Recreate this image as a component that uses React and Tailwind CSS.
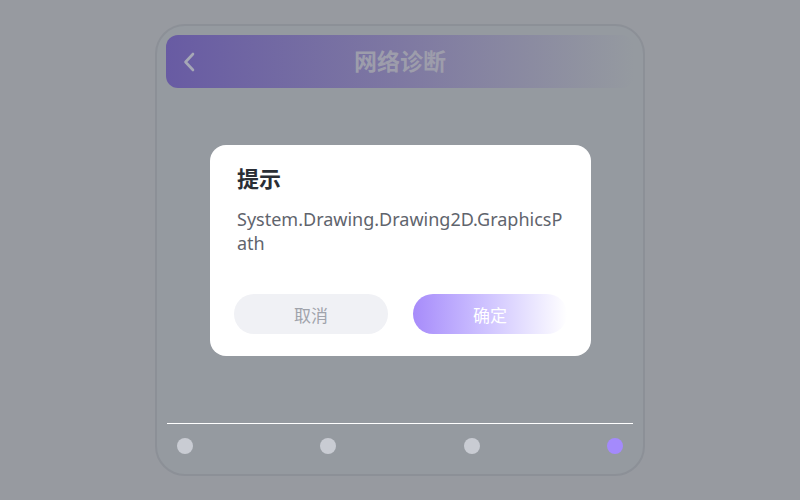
import React from "react";

const font = { fontFamily: '"Noto Sans", "Noto Sans CJK SC", sans-serif' };

export default function App() {
  return (
    <div
      className="relative w-[800px] h-[500px] bg-[#979aa0] flex justify-center pt-[24px] overflow-hidden"
      style={font}
    >
      <div className="w-[490px] h-[452px] rounded-[30px] border-2 border-[#8c9097] bg-[#959aa0] flex flex-col pt-[9px] px-[9px] pb-[20px]">
        <div className="h-[53px] rounded-[12px] bg-gradient-to-r from-[#685ba3] via-[#7e78a2] to-[#95989f00] flex items-center relative">
          <svg
            className="absolute left-[16px] top-[16px]"
            width="14"
            height="22"
            viewBox="0 0 14 22"
            fill="none"
          >
            <path
              d="M11 3 L3.5 11 L11 19"
              stroke="#a6a8b6"
              strokeWidth="2.6"
              strokeLinecap="round"
              strokeLinejoin="round"
            />
          </svg>
          <div className="flex-1 text-center text-[23px] font-bold text-[#9d9dab] leading-[53px]">
            网络诊断
          </div>
        </div>
        <div className="flex-1" />
        <div className="mx-[1px] h-px bg-white" />
        <div className="flex justify-between px-[11px] pt-[14px]">
          <div className="w-4 h-4 rounded-full bg-[#c9ccd3]" />
          <div className="w-4 h-4 rounded-full bg-[#c9ccd3]" />
          <div className="w-4 h-4 rounded-full bg-[#c9ccd3]" />
          <div className="w-4 h-4 rounded-full bg-[#a48afc]" />
        </div>
      </div>

      <div className="absolute left-[210px] top-[145px] w-[381px] h-[211px] rounded-[16px] bg-white px-[24px] pt-[18px] pb-[22px] flex flex-col">
        <div className="pl-[3px] text-[22px] font-bold leading-[30px] text-[#2a2e35]">
          提示
        </div>
        <div className="pl-[3px] mt-[14px] text-[18px] leading-[24px] text-[#5f646d] break-all">
          System.Drawing.Drawing2D.GraphicsPath
        </div>
        <div className="flex-1" />
        <div className="flex gap-[25px]">
          <div className="w-[154px] h-[40px] rounded-full bg-[#f0f1f5] flex items-center justify-center pt-[3px] text-[17px] text-[#a0a3ab]">
            取消
          </div>
          <div className="w-[154px] h-[40px] rounded-full bg-gradient-to-r from-[#a78bfa] to-[#ffffff] flex items-center justify-center pt-[3px] text-[17px] text-white">
            确定
          </div>
        </div>
      </div>
    </div>
  );
}
